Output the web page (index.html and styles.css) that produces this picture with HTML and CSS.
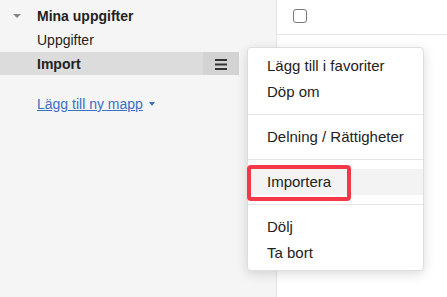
FILE: index.html
```html
<!DOCTYPE html>
<html lang="sv">
<head>
  <meta charset="UTF-8" />
  <title>Mina uppgifter</title>
  <link rel="stylesheet" href="styles.css">
</head>
<body>
  <div class="page">
    <!-- Sidebar -->
    <div class="sidebar">
      <div class="folder-head">
        <span class="caret"></span>
        <span class="folder-title">Mina uppgifter</span>
      </div>
      <div class="folder-item">Uppgifter</div>
      <div class="folder-item active">
        <span class="item-name">Import</span>
        <span class="item-menu">
          <svg width="12" height="12" viewBox="0 0 12 12">
            <rect x="0" y="1" width="12" height="2" fill="#333"/>
            <rect x="0" y="5.5" width="12" height="2" fill="#333"/>
            <rect x="0" y="10" width="12" height="2" fill="#333"/>
          </svg>
        </span>
      </div>
      <div class="add-folder">
        <a href="#">Lägg till ny mapp</a>
        <span class="small-caret"></span>
      </div>
    </div>

    <!-- Main -->
    <div class="main">
      <div class="top-row">
        <span class="checkbox"></span>
      </div>
    </div>
  </div>

  <!-- Context menu -->
  <div class="context-menu">
    <div class="menu-item">Lägg till i favoriter</div>
    <div class="menu-item">Döp om</div>
    <div class="menu-sep"></div>
    <div class="menu-item">Delning / Rättigheter</div>
    <div class="menu-sep"></div>
    <div class="menu-item hover">Importera</div>
    <div class="menu-sep"></div>
    <div class="menu-item">Dölj</div>
    <div class="menu-item">Ta bort</div>
  </div>
  <div class="highlight-box"></div>
</body>
</html>
```

FILE: styles.css
```css
* {
  margin: 0;
  padding: 0;
  box-sizing: border-box;
}

body {
  font-family: "Liberation Sans", Arial, sans-serif;
  color: #222;
  background: #fff;
  overflow: hidden;
}

.page {
  display: flex;
  height: 297px;
}

/* Sidebar */
.sidebar {
  width: 277px;
  background: #f5f5f5;
  border-right: 1px solid #e4e4e4;
  padding-top: 5px;
}

.folder-head {
  display: flex;
  align-items: center;
  height: 22px;
}

.caret {
  width: 0;
  height: 0;
  margin-left: 13px;
  margin-right: 16px;
  border-left: 4px solid transparent;
  border-right: 4px solid transparent;
  border-top: 4px solid #888;
}

.folder-title {
  font-size: 14px;
  font-weight: bold;
}

.folder-item {
  display: flex;
  align-items: center;
  height: 25px;
  padding-left: 37px;
  font-size: 14px;
}

.folder-item.active {
  background: #dcdcdc;
  width: 239px;
  height: 23px;
}

.item-name {
  flex: 1;
  font-weight: bold;
}

.item-menu {
  display: flex;
  align-items: center;
  justify-content: center;
  width: 36px;
  height: 23px;
  background: #d3d3d3;
}

.add-folder {
  display: flex;
  align-items: center;
  gap: 6px;
  margin-top: 21px;
  padding-left: 37px;
  height: 16px;
}

.add-folder a {
  color: #3b6fc2;
  font-size: 14px;
  text-decoration: underline;
}

.small-caret {
  width: 0;
  height: 0;
  border-left: 3.5px solid transparent;
  border-right: 3.5px solid transparent;
  border-top: 4px solid #3b6fc2;
}

/* Main */
.main {
  flex: 1;
}

.top-row {
  height: 35px;
  border-bottom: 1px solid #e6e6e6;
  padding: 9px 0 0 16px;
}

.checkbox {
  display: block;
  width: 14px;
  height: 14px;
  border: 1.5px solid #777;
  border-radius: 3px;
}

/* Context menu */
.context-menu {
  position: absolute;
  left: 247px;
  top: 47px;
  width: 177px;
  background: #fff;
  border: 1px solid #dedede;
  border-radius: 4px;
  box-shadow: 0 3px 12px rgba(0, 0, 0, 0.14);
  padding: 5px 0 4px;
}

.menu-item {
  height: 26px;
  line-height: 26px;
  padding-left: 19px;
  font-size: 15px;
  color: #222;
}

.menu-item.hover {
  background: #f3f3f3;
}

.menu-sep {
  height: 1px;
  background: #e5e5e5;
  margin: 9px 0;
}

.highlight-box {
  position: absolute;
  left: 247px;
  top: 165px;
  width: 104px;
  height: 36px;
  border: 4px solid #f5374a;
  border-radius: 4px;
}
```
